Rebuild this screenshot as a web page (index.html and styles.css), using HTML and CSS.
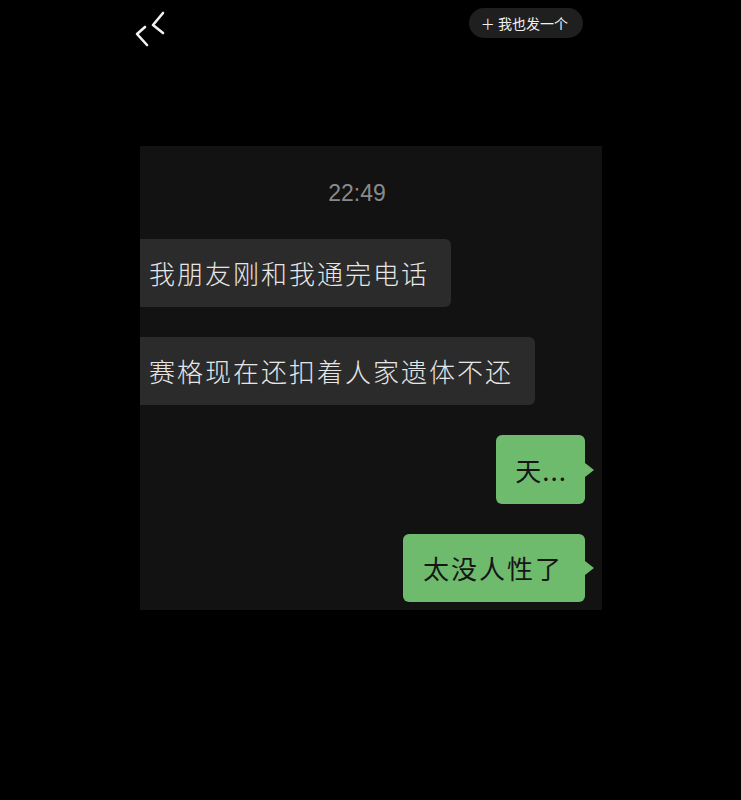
FILE: index.html
```html
<!DOCTYPE html>
<html lang="zh-CN">
<head>
  <meta charset="UTF-8" />
  <meta name="viewport" content="width=device-width,initial-scale=1.0" />
  <title>聊天截图</title>
  <link rel="stylesheet" href="styles.css">
</head>
<body>

  <header class="topbar">
    <svg class="back" width="34" height="42" viewBox="0 0 34 42" fill="none" stroke="#f2f2f2" stroke-width="2.6" stroke-linecap="round" stroke-linejoin="round">
      <polyline points="11,19 3,26 13,37" />
      <polyline points="29,5 19,17 29,25" />
    </svg>
    <div class="pill">＋ 我也发一个</div>
  </header>

  <section class="shot">
    <div class="time">22:49</div>

    <div class="row left">
      <div class="bubble gray">我朋友刚和我通完电话</div>
    </div>
    <div class="row left">
      <div class="bubble gray">赛格现在还扣着人家遗体不还</div>
    </div>
    <div class="row right">
      <div class="bubble green short">天...</div>
    </div>
    <div class="row right">
      <div class="bubble green">太没人性了</div>
    </div>
  </section>

</body>
</html>
```

FILE: styles.css
```css
body {
  margin: 0;
  background: #000;
  color: #eee;
  font-family: "Noto Sans CJK SC", "Noto Sans", sans-serif;
  height: 800px;
  overflow: hidden;
}

.topbar {
  display: flex;
  align-items: flex-start;
  justify-content: space-between;
  padding: 8px 158px 0 134px;
  height: 138px;
}

.pill {
  background: #1f1f1f;
  color: #f0f0f0;
  font-size: 14px;
  line-height: 30px;
  height: 30px;
  padding: 0 15px 0 12px;
  border-radius: 15px;
}

.shot {
  margin-left: 140px;
  width: 462px;
  height: 464px;
  background: #121212;
  display: flex;
  flex-direction: column;
  box-sizing: border-box;
  padding-top: 33px;
}

.time {
  text-align: center;
  color: #8a8a8a;
  font-family: "Liberation Sans", sans-serif;
  font-size: 23px;
  line-height: 28px;
  margin-bottom: 32px;
  padding-right: 28px;
}

.row {
  display: flex;
  margin-bottom: 30px;
}

.row.left {
  justify-content: flex-start;
}

.row.right {
  justify-content: flex-end;
  padding-right: 17px;
}

.bubble {
  position: relative;
  font-size: 26px;
  letter-spacing: 2px;
  line-height: 68px;
  height: 68px;
  border-radius: 6px;
  white-space: nowrap;
}

.bubble.gray {
  background: #2b2b2b;
  color: #e6e6e6;
  font-weight: 300;
  padding: 0 22px 0 9px;
  border-radius: 0 6px 6px 0;
}

.bubble.green {
  background: #6fbb6d;
  color: #161616;
  padding: 0 22px 0 20px;
}

.bubble.green.short {
  padding: 0 18px 0 19px;
  letter-spacing: 1px;
  height: 69px;
  line-height: 69px;
}

.bubble.green::after {
  content: "";
  position: absolute;
  right: -9px;
  top: 50%;
  margin-top: -7px;
  border-left: 9px solid #6fbb6d;
  border-top: 7px solid transparent;
  border-bottom: 7px solid transparent;
}
```
